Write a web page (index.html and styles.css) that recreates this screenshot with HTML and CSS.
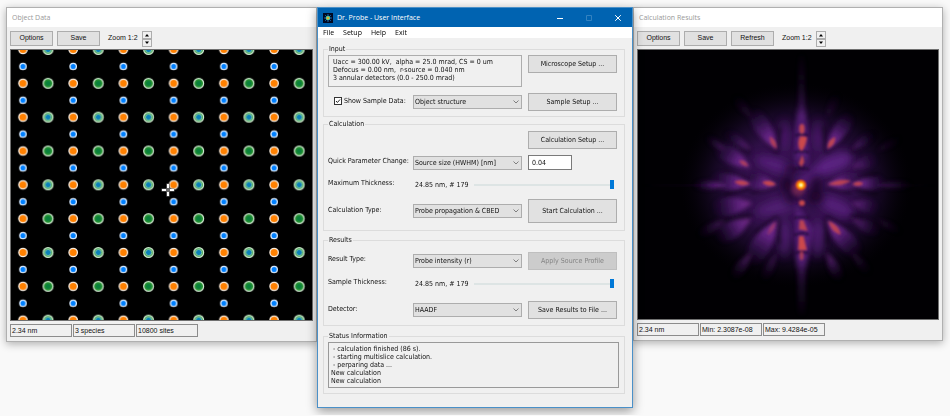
FILE: index.html
```html
<!DOCTYPE html>
<html lang="en">
<head>
  <meta charset="utf-8">
  <title>Dr. Probe - User Interface</title>
  <link rel="stylesheet" href="styles.css">
</head>
<body>
  <main class="desktop">

    <section class="window side-window">
      <h2 class="side-title">Object Data</h2>
      <div class="toolbar">
        <button type="button">Options</button>
        <button type="button">Save</button>
        <span class="zoom-label">Zoom 1:2</span>
        <div class="spinner">
          <button type="button" aria-label="Zoom in"><svg viewBox="0 0 8 6"><path d="M4 2 L6 4.500 H2 Z"/></svg></button>
          <button type="button" aria-label="Zoom out"><svg viewBox="0 0 8 6"><path d="M2 1.500 H6 L4 4 Z"/></svg></button>
        </div>
      </div>
      <svg class="view" viewBox="0 0 302 271" role="img" aria-label="Object structure">
        <defs>
          <pattern id="cell" width="50.400" height="67.900" patternUnits="userSpaceOnUse" patternTransform="translate(-1 -9)">
            <g stroke="#fbf0e4" stroke-width="1.300" fill="#ff8000">
              <circle cx="13" cy="8.500" r="4.200"/>
              <circle cx="13" cy="42.450" r="4.200"/>
            </g>
            <g stroke="#dcecff" stroke-width="1.300" fill="#0080ff">
              <circle cx="13" cy="25.480" r="3.200"/>
              <circle cx="13" cy="59.430" r="3.200"/>
            </g>
            <circle cx="38.200" cy="8.500" r="4.900" fill="#38a048" stroke="#d4ecd4" stroke-width="1.200"/>
            <circle cx="38.200" cy="8.500" r="3.100" fill="#0a80b8" stroke="#9cd4a8" stroke-width="0.800"/>
            <circle cx="38.200" cy="42.450" r="4.900" fill="#229030" stroke="#d4ecd4" stroke-width="1.200"/>
            <circle cx="38.200" cy="42.450" r="2.500" fill="#08803c"/>
          </pattern>
        </defs>
        <rect width="302" height="271" fill="#000"/>
        <rect width="302" height="271" fill="url(#cell)"/>
        <path d="M157.500 134 V147 M151 140.500 H164" stroke="#666" stroke-width="3.200"/>
        <path d="M157.500 134.500 V138.500 M157.500 142.500 V146.500 M151.500 140.500 H155.500 M159.500 140.500 H163.500" stroke="#fff" stroke-width="2"/>
      </svg>
      <div class="statusbar">
        <span>2.34 nm</span>
        <span>3 species</span>
        <span>10800 sites</span>
      </div>
    </section>

    <section class="window main-window">
      <header class="titlebar">
        <svg class="app-icon" viewBox="0 0 10 10">
          <rect width="10" height="10" fill="#000820"/>
          <path d="M5 1 V9 M1 5 H9 M2.200 2.200 L7.800 7.800 M7.800 2.200 L2.200 7.800" stroke="#1668b0" stroke-width="1"/>
          <circle cx="5" cy="5" r="2.300" fill="#2ab8a0"/>
          <circle cx="5" cy="5" r="1.600" fill="#d8e040"/>
          <circle cx="5" cy="5" r="0.800" fill="#f06020"/>
        </svg>
        <h1>Dr. Probe - User Interface</h1>
        <div class="caption-buttons">
          <button type="button" aria-label="Minimize"><svg viewBox="0 0 8 8"><path d="M1 4.500 H7"/></svg></button>
          <button type="button" aria-label="Maximize" disabled><svg viewBox="0 0 8 8"><path d="M1.500 1.500 H6.500 V6.500 H1.500 Z"/></svg></button>
          <button type="button" aria-label="Close"><svg viewBox="0 0 8 8"><path d="M1.200 1.200 L6.800 6.800 M6.800 1.200 L1.200 6.800"/></svg></button>
        </div>
      </header>
      <nav class="menubar">
        <a href="#file">File</a>
        <a href="#setup">Setup</a>
        <a href="#help">Help</a>
        <a href="#exit">Exit</a>
      </nav>

      <form class="panels">
        <fieldset class="group group-input">
          <legend>Input</legend>
          <div class="grid">
            <p class="info">Uacc = 300.00 kV,&nbsp; alpha = 25.0 mrad, CS = 0 um<br>Defocus = 0.00 nm,&nbsp; r-source = 0.040 nm<br>3 annular detectors (0.0 - 250.0 mrad)</p>
            <button type="button" class="top">Microscope Setup ...</button>
            <label class="check"><input type="checkbox" checked>Show Sample Data:</label>
            <select aria-label="Sample data"><option>Object structure</option></select>
            <button type="button">Sample Setup ...</button>
          </div>
        </fieldset>

        <fieldset class="group group-calculation">
          <legend>Calculation</legend>
          <div class="grid">
            <button type="button" class="last-column">Calculation Setup ...</button>
            <label for="parameter">Quick Parameter Change:</label>
            <select id="parameter"><option>Source size (HWHM) [nm]</option></select>
            <input type="text" class="number" value="0.04" aria-label="Parameter value">
            <label for="max-thickness">Maximum Thickness:</label>
            <div class="slider">
              <output for="max-thickness">24.85 nm, # 179</output>
              <input type="range" id="max-thickness" min="0" max="179" value="179">
            </div>
            <label for="calc-type">Calculation Type:</label>
            <select id="calc-type"><option>Probe propagation &amp; CBED</option></select>
            <button type="button" class="start">Start Calculation ...</button>
          </div>
        </fieldset>

        <fieldset class="group group-results">
          <legend>Results</legend>
          <div class="grid">
            <label for="result-type">Result Type:</label>
            <select id="result-type"><option>Probe intensity (r)</option></select>
            <button type="button" disabled>Apply Source Profile</button>
            <label for="sample-thickness">Sample Thickness:</label>
            <div class="slider">
              <output for="sample-thickness">24.85 nm, # 179</output>
              <input type="range" id="sample-thickness" min="0" max="179" value="179">
            </div>
            <label for="detector">Detector:</label>
            <select id="detector"><option>HAADF</option></select>
            <button type="button">Save Results to File ...</button>
          </div>
        </fieldset>

        <fieldset class="group group-status">
          <legend>Status Information</legend>
          <ul class="log">
            <li class="step">- calculation finished (86 s).</li>
            <li class="step">- starting multislice calculation.</li>
            <li class="step">- perparing data ...</li>
            <li>New calculation</li>
            <li>New calculation</li>
          </ul>
        </fieldset>
      </form>
    </section>

    <section class="window side-window">
      <h2 class="side-title">Calculation Results</h2>
      <div class="toolbar">
        <button type="button">Options</button>
        <button type="button">Save</button>
        <button type="button">Refresh</button>
        <span class="zoom-label">Zoom 1:2</span>
        <div class="spinner">
          <button type="button" aria-label="Zoom in"><svg viewBox="0 0 8 6"><path d="M4 2 L6 4.500 H2 Z"/></svg></button>
          <button type="button" aria-label="Zoom out"><svg viewBox="0 0 8 6"><path d="M2 1.500 H6 L4 4 Z"/></svg></button>
        </div>
      </div>
      <!-- beam centre is at 0,0 -->
      <svg class="view" viewBox="-492 -408 906 813" role="img" aria-label="Probe intensity">
        <defs>
          <radialGradient id="halo">
            <stop offset="0" stop-color="#4a1a6c"/>
            <stop offset="0.500" stop-color="#421662" stop-opacity="0.900"/>
            <stop offset="0.720" stop-color="#280e40" stop-opacity="0.650"/>
            <stop offset="1" stop-color="#06020c" stop-opacity="0"/>
          </radialGradient>
          <radialGradient id="beam">
            <stop offset="0" stop-color="#fffde0"/>
            <stop offset="0.220" stop-color="#ffe060"/>
            <stop offset="0.420" stop-color="#ff9808"/>
            <stop offset="0.650" stop-color="#e05818" stop-opacity="0.900"/>
            <stop offset="1" stop-color="#80204c" stop-opacity="0"/>
          </radialGradient>
          <linearGradient id="tail">
            <stop offset="0" stop-color="#8e369e"/>
            <stop offset="0.350" stop-color="#6e2890" stop-opacity="0.850"/>
            <stop offset="0.700" stop-color="#501c72" stop-opacity="0.350"/>
            <stop offset="1" stop-color="#3c1458" stop-opacity="0"/>
          </linearGradient>
          <linearGradient id="ray">
            <stop offset="0" stop-color="#6a2890" stop-opacity="0.700"/>
            <stop offset="0.500" stop-color="#4a1868" stop-opacity="0.300"/>
            <stop offset="1" stop-color="#6a2890" stop-opacity="0"/>
          </linearGradient>
          <linearGradient id="column" x1="0" y1="0" x2="0" y2="1">
            <stop offset="0" stop-color="#5c2280" stop-opacity="0"/>
            <stop offset="0.250" stop-color="#5c2280"/>
            <stop offset="0.750" stop-color="#5c2280"/>
            <stop offset="1" stop-color="#5c2280" stop-opacity="0"/>
          </linearGradient>
          <filter id="soft" x="-50%" y="-50%" width="200%" height="200%"><feGaussianBlur stdDeviation="4"/></filter>
          <filter id="medium" x="-50%" y="-50%" width="200%" height="200%"><feGaussianBlur stdDeviation="6"/></filter>
          <filter id="softer" x="-50%" y="-50%" width="200%" height="200%"><feGaussianBlur stdDeviation="13"/></filter>
          <path id="lobe" fill="url(#tail)" d="M0 0 C20 -9 38 -22 62 -26 C90 -30 120 -24 124 0 C120 24 90 30 62 26 C38 22 20 9 0 0 Z"/>
          <path id="core" fill="#c8484e" d="M4 0 C14 -4 22 -7 32 -6 C42 -4 48 -2 50 0 C48 2 42 4 32 6 C22 7 14 4 4 0 Z"/>
        </defs>
        <rect x="-492" y="-408" width="906" height="813" fill="#010003"/>
        <ellipse cx="-15" cy="0" rx="350" ry="310" fill="url(#halo)" opacity="0.800"/>

        <g filter="url(#softer)" fill="#62248a">
          <ellipse cx="-75" cy="-60" rx="66" ry="20" transform="rotate(18 -75 -60)" opacity="0.700"/>
          <ellipse cx="100" cy="-66" rx="60" ry="26" transform="rotate(-22 100 -66)" opacity="0.850"/>
          <ellipse cx="20" cy="-18" rx="90" ry="16" transform="rotate(-38 20 -18)" opacity="0.700"/>
          <ellipse cx="-70" cy="66" rx="70" ry="22" transform="rotate(-14 -70 66)" opacity="0.600"/>
          <ellipse cx="105" cy="64" rx="60" ry="24" transform="rotate(24 105 64)" opacity="0.700"/>
          <ellipse cx="-50" cy="160" rx="16" ry="56" opacity="0.600"/>
          <ellipse cx="50" cy="160" rx="18" ry="56" opacity="0.600"/>
          <ellipse cx="-50" cy="-150" rx="14" ry="50" opacity="0.500"/>
          <ellipse cx="52" cy="-150" rx="14" ry="50" opacity="0.500"/>
        </g>

        <!-- dark gaps between the lobes -->
        <g filter="url(#medium)" stroke="#08030f" stroke-width="9" stroke-linecap="round" opacity="0.600">
          <path d="M-73 -100 L-122 -155 M-73 -101 L-64 -170 M78 -102 L135 -150 M76 -102 L70 -175"/>
          <path d="M-73 98 L-135 142 M-68 108 L-66 175 M80 98 L145 138 M76 106 L80 175"/>
          <path d="M-78 -9 L-148 -26 M-78 6 L-148 22 M82 -9 L148 -26 M82 6 L148 20"/>
          <path d="M-156 -101 L-220 -152 M156 -101 L220 -152 M-152 92 L-230 110 M156 92 L230 122"/>
          <path d="M-154 -14 L-228 -40 M-154 8 L-228 28 M158 -14 L230 -34 M158 8 L230 28"/>
        </g>
        <g filter="url(#softer)" fill="#12061f" opacity="0.850">
          <ellipse cx="-42" cy="0" rx="18" ry="30"/>
          <ellipse cx="-28" cy="42" rx="22" ry="15"/>
          <ellipse cx="44" cy="36" rx="26" ry="20"/>
          <ellipse cx="46" cy="-4" rx="14" ry="24"/>
          <ellipse cx="-30" cy="-48" rx="18" ry="16"/>
        </g>

        <g filter="url(#medium)">
          <use href="#lobe" transform="translate(-71 -104) rotate(238) scale(1.200 0.900)"/>
          <use href="#lobe" transform="translate(77 -104) rotate(-56) scale(1.100 0.800)"/>
          <use href="#lobe" transform="translate(-71 103) rotate(122) scale(1.300 1.100)"/>
          <use href="#lobe" transform="translate(77 103) rotate(48) scale(1.200 1)"/>
          <use href="#lobe" transform="translate(-71 -1) rotate(188) scale(0.850 0.900)"/>
          <use href="#lobe" transform="translate(75 -1) rotate(-8) scale(1 0.950)"/>
          <use href="#lobe" transform="translate(-150 -2) rotate(187) scale(1 0.950)"/>
          <use href="#lobe" transform="translate(152 -2) rotate(-4) scale(0.850 0.700)"/>
          <use href="#lobe" transform="translate(-152 -52) rotate(212) scale(1 0.900)"/>
          <use href="#lobe" transform="translate(-147 54) rotate(172)" opacity="0.850"/>
          <use href="#lobe" transform="translate(-150 101) rotate(150)" opacity="0.850"/>
          <use href="#lobe" transform="translate(-150 -104) rotate(216) scale(0.800 0.500)" opacity="0.600"/>
          <use href="#lobe" transform="translate(152 -104) rotate(-38) scale(0.700 0.500)" opacity="0.500"/>
          <use href="#lobe" transform="translate(152 -52) rotate(-22) scale(0.700 0.700)" opacity="0.500"/>
          <use href="#lobe" transform="translate(152 53) rotate(12) scale(0.700 0.700)" opacity="0.600"/>
          <use href="#lobe" transform="translate(152 101) rotate(26) scale(0.800 0.700)" opacity="0.500"/>
          <use href="#lobe" transform="translate(-227 0) rotate(180) scale(0.800 0.450)" opacity="0.800"/>
          <use href="#lobe" transform="translate(230 0) scale(0.900 0.400)" opacity="0.350"/>
          <use href="#lobe" transform="translate(-227 -104) rotate(216) scale(0.600 0.400)" opacity="0.450"/>
          <use href="#lobe" transform="translate(-227 104) rotate(150) scale(0.800 0.500)" opacity="0.400"/>
          <use href="#lobe" transform="translate(230 104) rotate(28) scale(0.700 0.400)" opacity="0.200"/>
          <use href="#lobe" transform="translate(230 -104) rotate(-28) scale(0.700 0.400)" opacity="0.150"/>
          <use href="#lobe" transform="translate(-150 204) rotate(126) scale(0.800 0.600)" opacity="0.500"/>
          <use href="#lobe" transform="translate(-73 204) rotate(116) scale(0.800 0.500)" opacity="0.350"/>
          <use href="#lobe" transform="translate(77 202) rotate(64) scale(0.800 0.600)" opacity="0.600"/>
          <use href="#lobe" transform="translate(154 204) rotate(50) scale(0.700 0.500)" opacity="0.250"/>
          <use href="#lobe" transform="translate(-150 -204) rotate(232) scale(0.700 0.500)" opacity="0.200"/>
          <use href="#lobe" transform="translate(77 -204) rotate(-64) scale(0.700 0.500)" opacity="0.150"/>
        </g>

        <!-- vertical and horizontal streaks -->
        <g filter="url(#medium)">
          <path d="M-20 -40 L-14 -240 L16 -240 L26 -40 Z" fill="url(#column)" opacity="0.800"/>
          <path d="M-18 40 L-16 260 L18 260 L34 130 Z" fill="url(#column)" opacity="0.850"/>
          <rect x="0" y="-10" width="200" height="20" fill="url(#ray)" transform="translate(2 -200) rotate(-90)" opacity="0.800"/>
          <rect x="0" y="-12" width="190" height="24" fill="url(#ray)" transform="translate(2 210) rotate(90)"/>
        </g>
        <g filter="url(#soft)">
          <rect x="0" y="-2" width="260" height="4" fill="url(#ray)" transform="translate(-225 0) rotate(180)" opacity="0.600"/>
          <rect x="0" y="-2" width="180" height="4" fill="url(#ray)" transform="translate(230 0)" opacity="0.400"/>
        </g>
        <g filter="url(#soft)" stroke="#180826" stroke-width="6" fill="none" opacity="0.700">
          <path d="M-20 -48 Q2 -56 24 -48 M-20 -98 Q2 -106 24 -98 M-18 -150 Q2 -156 22 -150"/>
          <path d="M-20 100 Q2 92 24 100 M-20 152 Q2 138 24 150 M-18 206 Q2 196 22 206"/>
        </g>

        <g filter="url(#soft)">
          <use href="#core" transform="translate(-72 -107) rotate(242) scale(0.900 1.100)" opacity="0.750"/>
          <use href="#core" transform="translate(79 -107) rotate(-58) scale(0.900 1.200)" opacity="0.900"/>
          <use href="#core" transform="translate(-74 108) rotate(122)" opacity="0.400"/>
          <use href="#core" transform="translate(80 105) rotate(48) scale(1.200 1.300)" opacity="0.850"/>
          <use href="#core" transform="translate(-72 -2) rotate(188) scale(0.900 1.100)"/>
          <use href="#core" transform="translate(76 -2) rotate(-8) scale(1.500 1.200)" opacity="0.850"/>
          <use href="#core" transform="translate(-151 -3) rotate(188) scale(1 1.100)" opacity="0.900"/>
          <use href="#core" transform="translate(153 -3) rotate(-4) scale(0.700 1)" opacity="0.900"/>
          <use href="#core" transform="translate(-156 -56) rotate(212) scale(0.700 1)" opacity="0.700"/>
        </g>
        <g filter="url(#soft)" fill="#cc4a4c">
          <path d="M2 -54 L-6 -66 L4 -92 L10 -70 Z" opacity="0.900"/>
          <path d="M2 -102 C-10 -112 -10 -132 -2 -148 L18 -146 C18 -130 10 -112 2 -102 Z"/>
          <ellipse cx="3" cy="-170" rx="8" ry="15" opacity="0.900"/>
          <ellipse cx="3" cy="54" rx="9" ry="9"/>
          <path d="M-4 106 L8 106 L20 138 L-6 134 Z" opacity="0.850"/>
          <path d="M-6 154 L8 154 L18 196 L-8 196 Z"/>
          <ellipse cx="2" cy="213" rx="6" ry="14" opacity="0.700"/>
        </g>
        <circle cx="-8" cy="12" r="20" fill="#a0344c" opacity="0.500" filter="url(#medium)"/>
        <circle cx="0" cy="0" r="21" fill="url(#beam)"/>
      </svg>
      <div class="statusbar">
        <span>2.34 nm</span>
        <span>Min: 2.3087e-08</span>
        <span>Max: 9.4284e-05</span>
      </div>
    </section>

  </main>
</body>
</html>
```
FILE: styles.css
```css
* {
  box-sizing: border-box;
}

body {
  margin: 0;
  background-color: #f9f9f9;
  color: #111111;
  font-family: "DejaVu Sans Condensed", "DejaVu Sans", sans-serif;
  font-size: 7px;
  line-height: 8px;
}

button,
input,
select {
  font: inherit;
  color: inherit;
  margin: 0;
}

h1,
h2,
p,
ul {
  margin: 0;
  padding: 0;
  font-weight: normal;
}

.desktop {
  display: grid;
  grid-template-columns: 311fr 316fr 310fr;
  align-items: start;
  padding: 7px 7px 7px 6px;
}

/* windows */
.window {
  background-color: #f0f0f0;
  border: 1px solid #b0b0b0;
  box-shadow: 0 2px 8px rgba(0, 0, 0, 0.3);
}

.side-window {
  font-family: "Liberation Sans", Arial, sans-serif;
}

.main-window {
  position: relative;
  border-color: #4a90c8;
  box-shadow: 0 3px 10px rgba(0, 0, 0, 0.4);
  padding-bottom: 13px;
}

.side-title {
  height: 19px;
  padding-left: 5px;
  background-color: #ffffff;
  color: #999999;
  font-family: "Open Sans", sans-serif;
  font-size: 7px;
  line-height: 19px;
}

/* buttons */
button {
  padding: 0;
  background-color: #e1e1e1;
  border: 1px solid #adadad;
  white-space: nowrap;
}

button:disabled {
  background-color: #cccccc;
  border-color: #bfbfbf;
  color: #838383;
}

.toolbar {
  display: flex;
  align-items: center;
  gap: 4px;
  height: 22px;
  padding: 0 3px;
}

.toolbar > button {
  width: 43px;
  height: 15px;
}

.zoom-label {
  margin-left: 4px;
}

.spinner {
  display: grid;
  width: 10px;
  height: 15px;
}

.spinner button {
  display: flex;
  background-color: #f0f0f0;
}

.spinner svg {
  width: 8px;
  height: 6px;
}

.view {
  display: block;
  width: calc(100% - 6px);
  margin: 0 3px;
  border: 1px solid #707070;
}

.statusbar {
  display: flex;
  gap: 1px;
  padding: 3px 3px 4px;
}

.statusbar span {
  width: 62px;
  height: 13px;
  padding-left: 1px;
  border: 1px solid #8c8c8c;
  line-height: 11px;
  white-space: nowrap;
}

/* main window */
.titlebar {
  display: flex;
  align-items: center;
  height: 19px;
  padding-left: 5px;
  background-color: #0063b1;
  color: #ffffff;
}

.titlebar h1 {
  flex: 1;
  margin-left: 4px;
  font-family: "Open Sans", sans-serif;
  font-size: 7px;
}

.app-icon {
  width: 10px;
  height: 10px;
}

.caption-buttons {
  display: flex;
}

.caption-buttons button {
  display: flex;
  justify-content: center;
  width: 29px;
  background: none;
  border: none;
}

.caption-buttons svg {
  width: 8px;
  height: 8px;
  fill: none;
  stroke: #ffffff;
}

.caption-buttons button:disabled {
  opacity: 0.2;
}

.menubar {
  display: flex;
  gap: 9px;
  height: 11px;
  padding: 0 5px;
  background-color: #ffffff;
  font-family: "Open Sans", sans-serif;
  line-height: 11px;
}

.menubar a {
  color: #000000;
  text-decoration: none;
}

.panels {
  display: grid;
  gap: 2px;
  padding: 6px 7px 0 5px;
}

.group {
  min-width: 0;
  margin: 0;
  padding: 1px 7px 5px 4px;
  border: 1px solid #dcdcdc;
}

.group legend {
  height: 10px;
  padding: 0 1px;
  line-height: 10px;
}

.grid {
  display: grid;
  grid-template-columns: 79px minmax(0, 1fr) 89px;
  column-gap: 6px;
  row-gap: 6px;
  align-items: center;
}

.grid label {
  padding-bottom: 3px;
  white-space: nowrap;
}

.grid button {
  height: 18px;
}

.group-calculation {
  padding-top: 2px;
  padding-bottom: 7px;
}

.group-calculation .grid {
  grid-template-rows: 18px 15px 17px 24px;
}

.group-results {
  margin-top: 2px;
  padding-top: 7px;
  padding-bottom: 3px;
}

.group-results .grid {
  grid-template-rows: 17px 17px 24px;
}

.group-status {
  margin-top: 3px;
}

.info {
  grid-column: span 2;
  height: 32px;
  padding: 2px 4px;
  border: 1px solid #adadad;
  white-space: nowrap;
}

.grid .top {
  align-self: start;
}

.grid .last-column {
  grid-column: 3;
}

.grid .start {
  height: 24px;
}

.grid .check {
  display: flex;
  align-items: center;
  gap: 2px;
  padding-left: 6px;
}

.check input {
  appearance: none;
  width: 8px;
  height: 8px;
  border: 1px solid #333333;
  background: #ffffff url("data:image/svg+xml,%3Csvg xmlns='http://www.w3.org/2000/svg' viewBox='0 0 6 6'%3E%3Cpath d='M1 3 L2.400 4.500 L5 1.500' fill='none' stroke='%23222'/%3E%3C/svg%3E") center / 6px 6px no-repeat;
}

select {
  appearance: none;
  width: 100%;
  height: 14px;
  padding: 0 12px 0 1px;
  border: 1px solid #adadad;
  border-radius: 0;
  background: #e1e1e1 url("data:image/svg+xml,%3Csvg xmlns='http://www.w3.org/2000/svg' viewBox='0 0 6 4'%3E%3Cpath d='M0.500 0.500 L3 3 L5.500 0.500' fill='none' stroke='%23666' stroke-width='0.800'/%3E%3C/svg%3E") right 2px center / 6px 4px no-repeat;
}

.number {
  width: 44px;
  height: 15px;
  padding: 0 3px;
  border: 1px solid #7a7a7a;
  background-color: #ffffff;
}

.slider {
  display: flex;
  grid-column: span 2;
  align-items: center;
  gap: 6px;
  padding: 0 3px 0 2px;
  white-space: nowrap;
}

.slider input {
  appearance: none;
  flex: 1;
  min-width: 0;
  height: 9px;
  background: linear-gradient(#dde4e4, #dde4e4) center / 100% 2px no-repeat;
}

.slider input::-webkit-slider-thumb {
  appearance: none;
  width: 4px;
  height: 9px;
  background-color: #0078d7;
}

.log {
  height: 46px;
  margin-right: -2px;
  padding: 2px;
  border: 1px solid #999999;
  list-style: none;
}

.log .step {
  padding-left: 2px;
}
```
